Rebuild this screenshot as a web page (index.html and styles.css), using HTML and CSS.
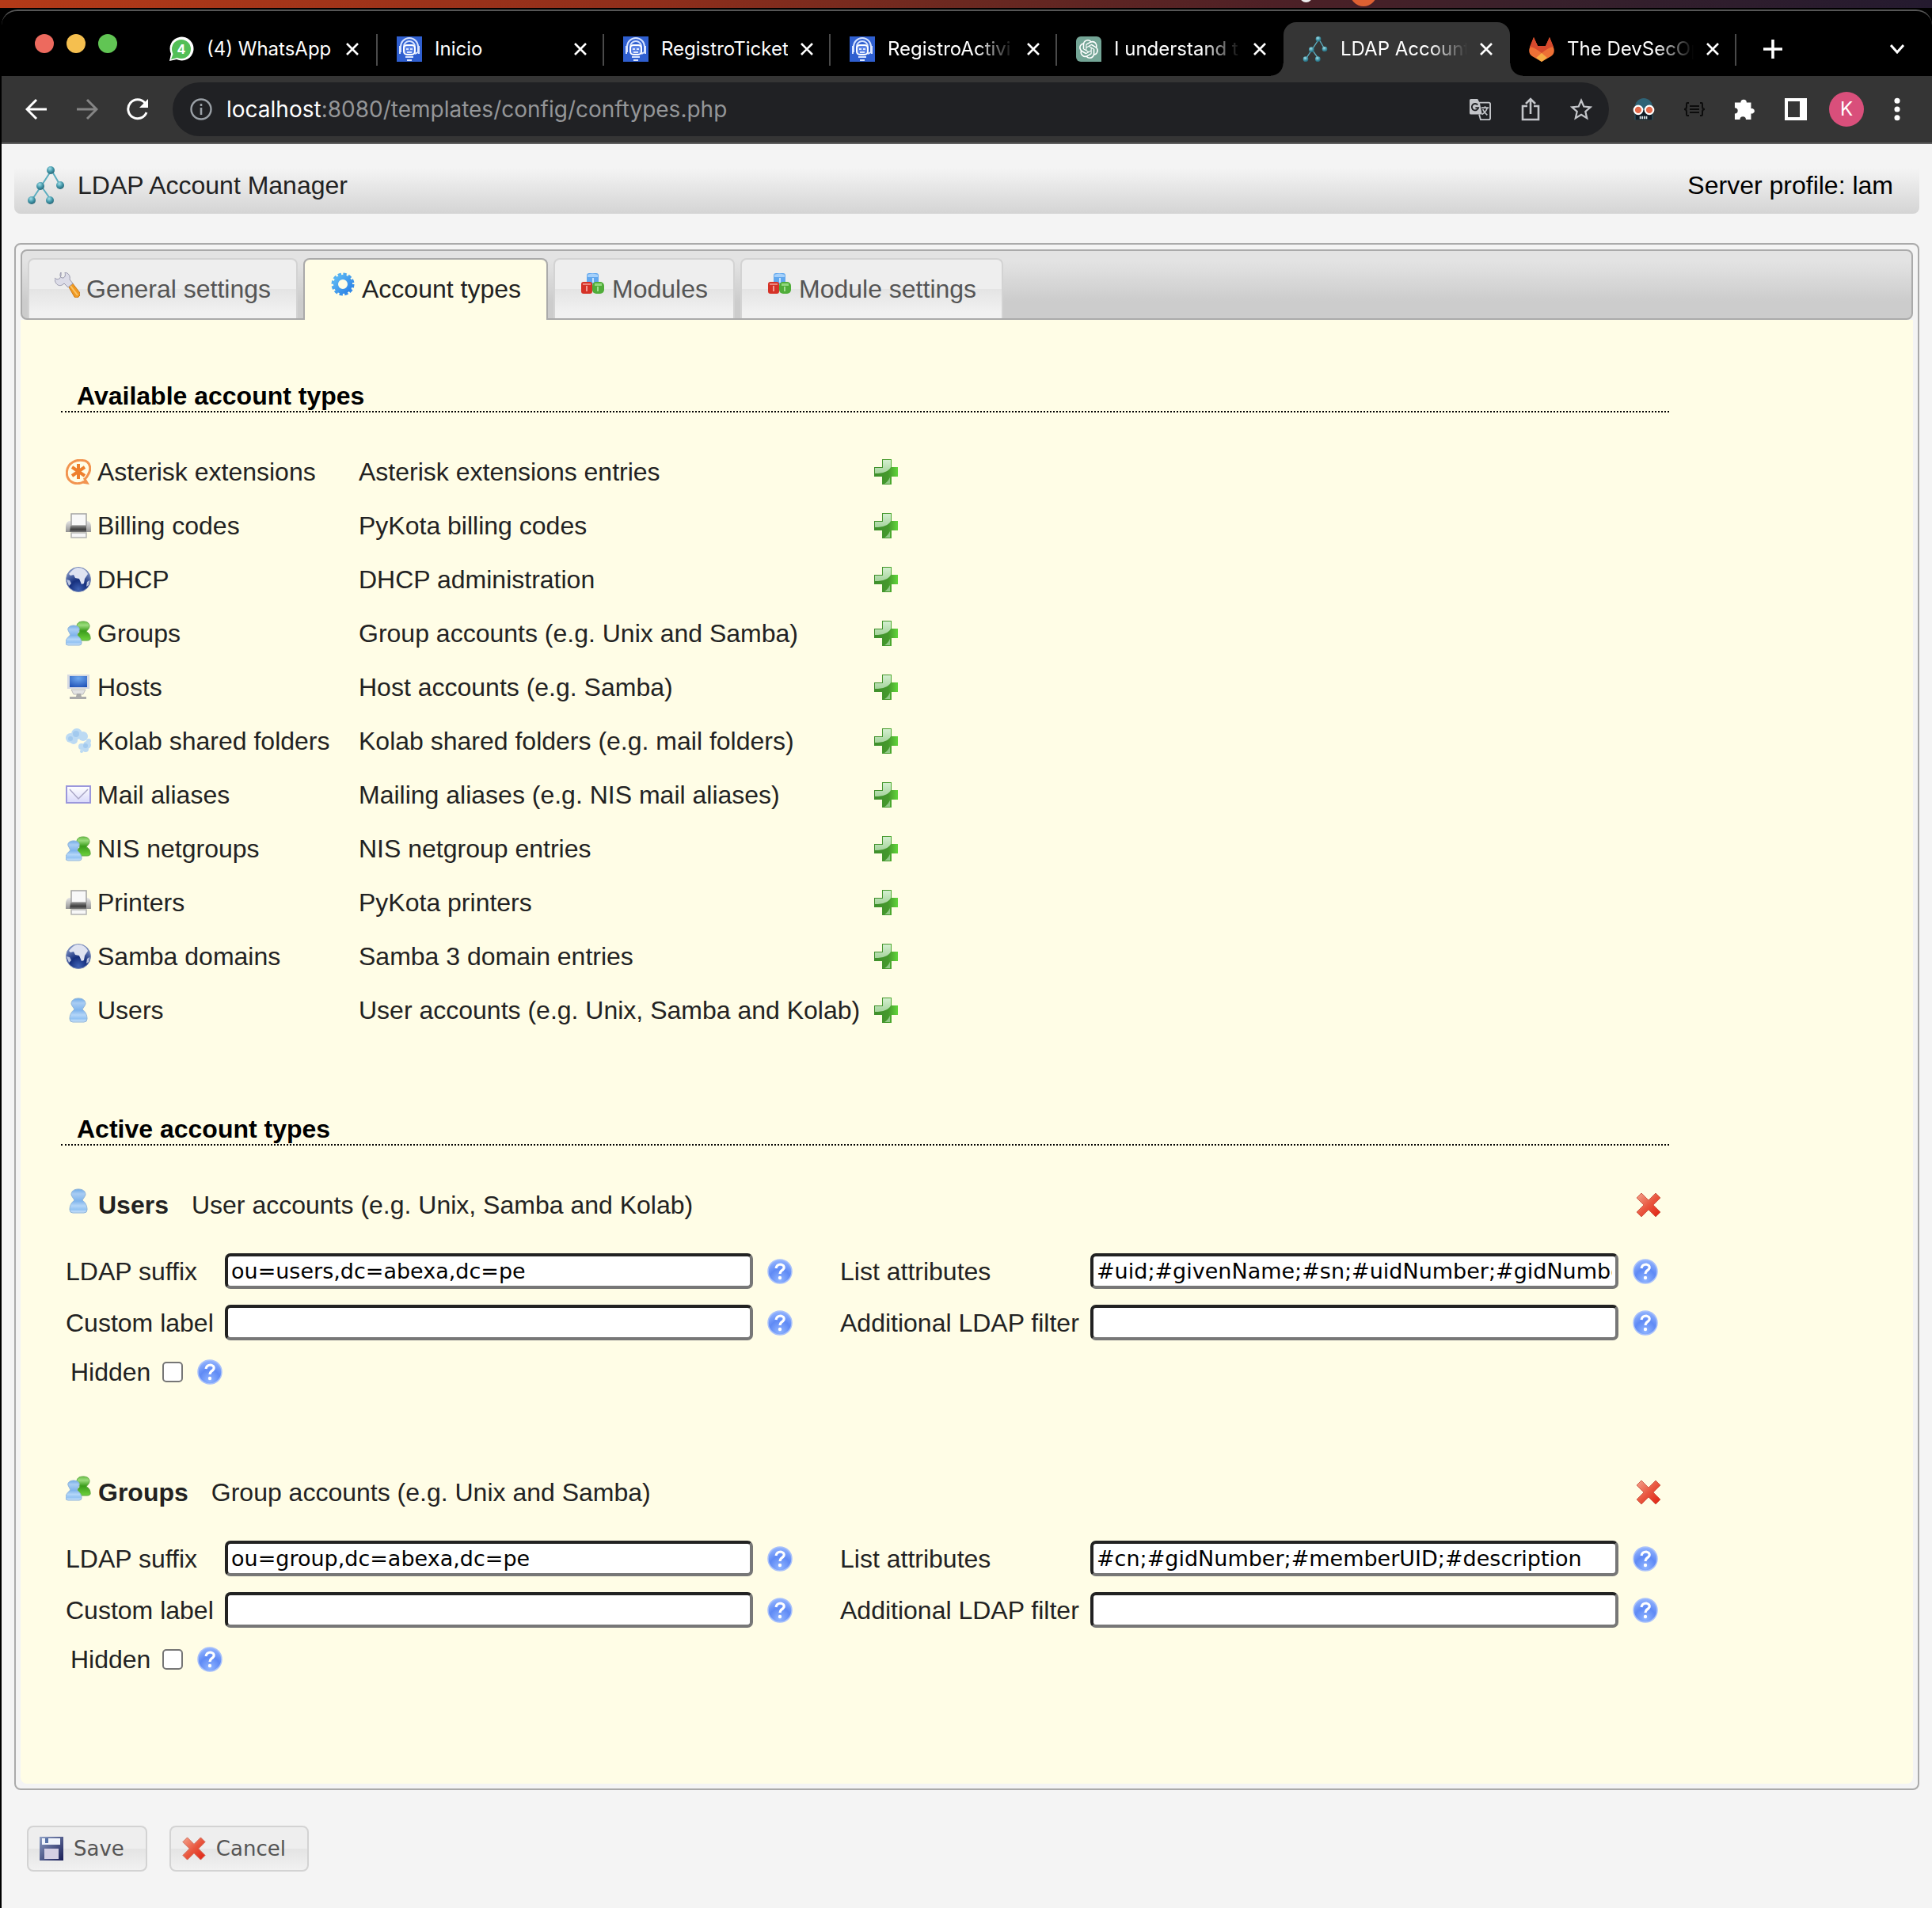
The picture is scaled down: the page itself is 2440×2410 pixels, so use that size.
FILE: index.html
```html
<!DOCTYPE html>
<html lang="en">
<head>
<meta charset="utf-8">
<title>LDAP Account Manager</title>
<link rel="stylesheet" href="styles.css">
</head>
<body>
<svg class="sprite" aria-hidden="true">
  <defs>
    <linearGradient id="g-blue" x1="0" y1="0" x2="0" y2="1"><stop offset="0" stop-color="#6fabe8"/><stop offset=".2" stop-color="#a9cdf3"/><stop offset=".5" stop-color="#7fb4ec"/><stop offset=".7" stop-color="#b4d6f8"/><stop offset=".85" stop-color="#93c3f3"/><stop offset="1" stop-color="#cfe5fb"/></linearGradient>
    <linearGradient id="g-green" x1="0" y1="0" x2="0" y2="1"><stop offset="0" stop-color="#6cc24a"/><stop offset=".2" stop-color="#9bdc7c"/><stop offset=".5" stop-color="#3a9c1a"/><stop offset="1" stop-color="#6fd23e"/></linearGradient>
    <linearGradient id="g-plus" x1="0" y1="0" x2="1" y2="0"><stop offset="0" stop-color="#3f8f2c"/><stop offset=".6" stop-color="#45992c"/><stop offset="1" stop-color="#62d63c"/></linearGradient>
    <linearGradient id="g-shine" x1="0" y1="0" x2="0" y2="1"><stop offset="0" stop-color="#d3efcf"/><stop offset="1" stop-color="#a5d39c"/></linearGradient>
    <linearGradient id="g-red" x1="0" y1="0" x2="1" y2="1"><stop offset="0" stop-color="#f4a48d"/><stop offset=".5" stop-color="#e9573f"/><stop offset="1" stop-color="#e01f10"/></linearGradient>
    <radialGradient id="g-help" cx=".5" cy=".85" r=".9"><stop offset="0" stop-color="#8fb4ff"/><stop offset=".5" stop-color="#5f8af5"/><stop offset="1" stop-color="#9dbcff"/></radialGradient>
    <radialGradient id="g-globe" cx=".5" cy=".9" r=".9"><stop offset="0" stop-color="#3f62b4"/><stop offset=".4" stop-color="#16307e"/><stop offset="1" stop-color="#8ea1cf"/></radialGradient>
    <linearGradient id="g-print" x1="0" y1="0" x2="0" y2="1"><stop offset="0" stop-color="#e6e6e6"/><stop offset="1" stop-color="#929292"/></linearGradient>
    <linearGradient id="g-dark" x1="0" y1="0" x2="0" y2="1"><stop offset="0" stop-color="#8a8a8a"/><stop offset=".6" stop-color="#3c3c3c"/><stop offset="1" stop-color="#777"/></linearGradient>
    <radialGradient id="g-screen" cx=".5" cy=".2" r=".9"><stop offset="0" stop-color="#6fa8ee"/><stop offset="1" stop-color="#1d4fb5"/></radialGradient>
    <linearGradient id="g-mail" x1="0" y1="0" x2="0" y2="1"><stop offset="0" stop-color="#fff"/><stop offset="1" stop-color="#d9d9fa"/></linearGradient>
    <linearGradient id="g-gear" x1="0" y1="0" x2="1" y2="1"><stop offset="0" stop-color="#5db9f4"/><stop offset="1" stop-color="#2d83e6"/></linearGradient>
    <linearGradient id="g-disk" x1="0" y1="0" x2="1" y2="1"><stop offset="0" stop-color="#8e9fc4"/><stop offset="1" stop-color="#171b55"/></linearGradient>
    <radialGradient id="g-node" cx=".4" cy=".3" r=".8"><stop offset="0" stop-color="#a4e0ea"/><stop offset=".5" stop-color="#4296a8"/><stop offset="1" stop-color="#1d5666"/></radialGradient>
  </defs>
  <symbol id="i-lam" viewBox="0 0 48 48"><path d="M31 5 18 25 6 43M31 5l11 19M18 25l12 17" fill="none" stroke="#5cadbf" stroke-width="2"/><g fill="url(#g-node)"><circle cx="30" cy="5" r="5"/><circle cx="17" cy="25" r="5"/><circle cx="42" cy="24" r="5"/><circle cx="6" cy="43" r="5"/><circle cx="29" cy="43" r="5"/></g></symbol>
  <symbol id="i-wa" viewBox="0 0 32 32"><path d="M1 31 3 22A15 15 0 1 1 10 29Z" fill="#fff"/><circle cx="16" cy="16" r="12" fill="#52bf56"/><path d="M3 29 6 21 11 27Z" fill="#52bf56"/></symbol>
  <symbol id="i-robot" viewBox="0 0 32 32"><path fill="#2f5fd0" d="M0 0h32v32H0z"/><path d="M5 20V13a11 11 0 0 1 22 0v7l-4 2M9 19v-6a7 7 0 0 1 14 0v6" fill="none" stroke="#d5e2ff" stroke-width="2"/><rect x="9" y="11" width="14" height="12" rx="4" fill="#5b83e4" stroke="#fff" stroke-width="2"/><path d="M12 16h3m2 0h3M13 20h6M11 26h10M13 30h6M4 12v10M28 12v10" stroke="#dbe6ff" stroke-width="2"/></symbol>
  <symbol id="i-gpt" viewBox="0 0 32 32"><path d="M6 0h20a6 6 0 0 1 6 6v26H6a6 6 0 0 1-6-6V6a6 6 0 0 1 6-6Z" fill="#74a596"/><path transform="translate(4 4)" fill="#fff" d="M22.2819 9.8211a5.9847 5.9847 0 0 0-.5157-4.9108 6.0462 6.0462 0 0 0-6.5098-2.9A6.0651 6.0651 0 0 0 4.9807 4.1818a5.9847 5.9847 0 0 0-3.9977 2.9 6.0462 6.0462 0 0 0 .7427 7.0966 5.98 5.98 0 0 0 .511 4.9107 6.051 6.051 0 0 0 6.5146 2.9001A5.9847 5.9847 0 0 0 13.2599 24a6.0557 6.0557 0 0 0 5.7718-4.2058 5.9894 5.9894 0 0 0 3.9977-2.9001 6.0557 6.0557 0 0 0-.7475-7.0729zm-9.022 12.6081a4.4755 4.4755 0 0 1-2.8764-1.0408l.1419-.0804 4.7783-2.7582a.7948.7948 0 0 0 .3927-.6813v-6.7369l2.02 1.1686a.071.071 0 0 1 .038.052v5.5826a4.504 4.504 0 0 1-4.4945 4.4944zm-9.6607-4.1254a4.4708 4.4708 0 0 1-.5346-3.0137l.142.0852 4.783 2.7582a.7712.7712 0 0 0 .7806 0l5.8428-3.3685v2.3324a.0804.0804 0 0 1-.0332.0615L9.74 19.9502a4.4992 4.4992 0 0 1-6.1408-1.6464zM2.3408 7.8956a4.485 4.485 0 0 1 2.3655-1.9728V11.6a.7664.7664 0 0 0 .3879.6765l5.8144 3.3543-2.0201 1.1685a.0757.0757 0 0 1-.071 0l-4.8303-2.7865A4.504 4.504 0 0 1 2.3408 7.872zm16.5963 3.8558L13.1038 8.364 15.1192 7.2a.0757.0757 0 0 1 .071 0l4.8303 2.7913a4.4944 4.4944 0 0 1-.6765 8.1042v-5.6772a.79.79 0 0 0-.407-.667zm2.0107-3.0231l-.142-.0852-4.7735-2.7818a.7759.7759 0 0 0-.7854 0L9.409 9.2297V6.8974a.0662.0662 0 0 1 .0284-.0615l4.8303-2.7866a4.4992 4.4992 0 0 1 6.6802 4.66zM8.3065 12.863l-2.02-1.1638a.0804.0804 0 0 1-.038-.0567V6.0742a4.4992 4.4992 0 0 1 7.3757-3.4537l-.142.0805L8.704 5.459a.7948.7948 0 0 0-.3927.6813zm1.0976-2.3654l2.602-1.4998 2.6069 1.4998v2.9994l-2.5974 1.4997-2.6067-1.4997Z"/></symbol>
  <symbol id="i-gitlab" viewBox="0 0 32 32"><path d="M6 1 1 14c-2 5 0 9 3 11l12 7 12-7c3-2 5-6 3-11L26 1l-5 11H11Z" fill="#ee7035"/><path d="M6 1 1 13c6 1 10 4 15 8 5-4 9-7 15-8L26 1l-5 11H11Z" fill="#d5492d"/><path d="m9 27 7-6 7 6-7 5Z" fill="#f7ac43"/></symbol>
  <symbol id="i-x" viewBox="0 0 16 16"><path d="m1 1 14 14M15 1 1 15" stroke="currentColor" stroke-width="2.600"/></symbol>
  <symbol id="i-newtab" viewBox="0 0 24 24"><path d="M12 0v24M0 12h24" stroke="currentColor" stroke-width="3.600"/></symbol>
  <symbol id="i-chev" viewBox="0 0 18 12"><path d="m1 1 8 9 8-9" fill="none" stroke="currentColor" stroke-width="3"/></symbol>
  <symbol id="i-back" viewBox="0 0 28 28"><path d="M27 14H3M14 2 2 14l12 12" fill="none" stroke="currentColor" stroke-width="3"/></symbol>
  <symbol id="i-fwd" viewBox="0 0 28 28"><path d="M1 14h24M14 2l12 12-12 12" fill="none" stroke="currentColor" stroke-width="3"/></symbol>
  <symbol id="i-reload" viewBox="0 0 28 28"><path d="M25 18A12 12 0 1 1 23 6" fill="none" stroke="currentColor" stroke-width="3"/><path d="M27 1v11H16Z" fill="currentColor"/></symbol>
  <symbol id="i-info" viewBox="0 0 28 28"><circle cx="14" cy="14" r="12.500" fill="none" stroke="currentColor" stroke-width="2.400"/><path d="M14 12v9M14 7v3" stroke="currentColor" stroke-width="2.600"/></symbol>
  <symbol id="i-trans" viewBox="0 0 30 30"><path d="M3 1h9l3 6 3 15H3a2 2 0 0 1-2-2V3a2 2 0 0 1 2-2Z" fill="#c3c5c9"/><path d="M14 6h13a2 2 0 0 1 2 2v19a2 2 0 0 1-2 2H16l-2-7" fill="none" stroke="#c3c5c9" stroke-width="2"/><path d="M12 9a4.500 4.500 0 1 0 1 4H9" fill="none" stroke="#202124" stroke-width="2"/><path d="M17 13h10M22 11v2M25 13c-1 4-4 7-7 9M19 15c1 3 4 6 6 8" fill="none" stroke="#c3c5c9" stroke-width="1.800"/></symbol>
  <symbol id="i-share" viewBox="0 0 28 30"><path d="M10 11H4v17h20V11h-6M14 21V3M8 8l6-6 6 6" fill="none" stroke="currentColor" stroke-width="2.600"/></symbol>
  <symbol id="i-star" viewBox="0 0 30 30"><path d="m15 3 3.500 8.300 9 .8-6.800 6 2 8.900-7.700-4.700L7.300 27l2-8.900-6.800-6 9-.8Z" fill="none" stroke="currentColor" stroke-width="2.400"/></symbol>
  <symbol id="i-goggles" viewBox="0 0 32 32"><path d="M3 14C3 6 9 0 16 0s13 6 13 14v17H3Z" fill="#2f6376"/><path d="M4 17h24v14H4z" fill="#111c26"/><g fill="#e2694a" stroke="#fff" stroke-width="2.500"><circle cx="8" cy="17" r="6"/><circle cx="24" cy="17" r="6"/></g><path d="M10 28h12" stroke="#dfe7ea" stroke-width="4" stroke-dasharray="2 1"/></symbol>
  <symbol id="i-json" viewBox="0 0 28 18"><path d="M7 1H5Q4 1 4 3v3q0 3-3 3 3 0 3 3v3q0 2 1 2h2M21 1h2q1 0 1 2v3q0 3 3 3-3 0-3 3v3q0 2-1 2h-2M8 5h12M8 9h12M8 13h12" fill="none" stroke="#0c0c0c" stroke-width="2"/></symbol>
  <symbol id="i-puzzle" viewBox="0 0 30 30"><path d="M9 6a4 4 0 0 1 8 0h6v8h2a3.600 3.600 0 0 1 0 7h-2v8h-7a4 4 0 0 0-8 0H1v-8a4 4 0 0 0 0-8V6Z" fill="currentColor"/></symbol>
  <symbol id="i-panel" viewBox="0 0 28 28"><path d="M0 0h28v28H0Zm4 4v20h15V4Z" fill="currentColor" fill-rule="evenodd"/></symbol>
  <symbol id="i-dots" viewBox="0 0 8 28"><g fill="currentColor"><circle cx="4" cy="4" r="3.300"/><circle cx="4" cy="14" r="3.300"/><circle cx="4" cy="24" r="3.300"/></g></symbol>
  <symbol id="i-wrench" viewBox="0 0 32 32"><path d="m17 17 5-4 10 13c1 4-4 8-7 5Z" fill="#f09a22" stroke="#c9791c"/><path d="m20 17 9 12" stroke="#fbc469" stroke-width="2"/><path d="M8 0C6 3 7 7 10 7s4-3 3-7c5 1 7 5 6 9l4 5-6 5-5-5C6 20 0 15 0 7c4 4 9 1 8-7Z" fill="#dcdce8" stroke="#9797ab"/></symbol>
  <symbol id="i-gear" viewBox="0 0 32 32"><circle cx="16" cy="15" r="12" fill="none" stroke="url(#g-gear)" stroke-width="5" stroke-dasharray="4 2.283"/><circle cx="16" cy="15" r="9" fill="none" stroke="url(#g-gear)" stroke-width="6"/></symbol>
  <symbol id="i-cubes" viewBox="0 0 32 32"><rect x="8" y="1" width="15" height="14" rx="3" fill="#62a8ee"/><path d="M9 3q6-3 13 0v3H9Z" fill="#a5d0fa"/><path d="M15 7h2v6h-2z" fill="#c5e2ff"/><rect x="1" y="12" width="14" height="15" rx="3" fill="#d53227"/><path d="M3 14h10v2H3z" fill="#ec867c"/><path d="M7 17h2v7H7z" fill="#f19a92"/><rect x="15" y="12" width="15" height="15" rx="5" fill="#50ad3a"/><path d="M18 14h9v3h-9z" fill="#93d77e"/><path d="M21 18h2v6h-2z" fill="#a2dd90"/></symbol>
  <symbol id="i-asterisk" viewBox="0 0 32 32"><path d="M24 28C11 35 0 27 1.500 15 3 4 14 0 22 1.500c9 1 11 11 6 18.500-2 4-4 5-4 5l3 5-6-1" fill="none" stroke="#f29450" stroke-width="3"/><path d="M16 6v19M8 10l16 11M24 10 8 21" stroke="#ee7f2d" stroke-width="4"/></symbol>
  <symbol id="i-printer" viewBox="0 0 32 32"><path d="M4 10h24q4 2 4 7v7H0v-7q0-5 4-7Z" fill="url(#g-print)"/><rect x="7" y="1" width="19" height="15" fill="#f8f8f8" stroke="#a3a3a3" stroke-width="1.500"/><path d="M6 16h20v8H5Z" fill="url(#g-dark)"/><path d="M7 25h19v6H7z" fill="#f7f7f7" stroke="#b3b3b3" stroke-width="1.500"/></symbol>
  <symbol id="i-globe" viewBox="0 0 32 32"><circle cx="16" cy="16" r="15.500" fill="url(#g-globe)" stroke="#7c8cb8"/><path d="M4 9C7 5 10 2 15 1c6 0 11 3 13 8l-2 3-2 3-1 6-3 1-3-7-5-1-2-4-4 1Z" fill="#dfe3f1"/><path d="m1 16 4 1 2 4-3 3Zm26 3 3-2-1 6-3 2Z" fill="#bac4df"/></symbol>
  <symbol id="i-user" viewBox="0 0 32 32"><path d="M16 1C10 1 7 4 7 8c1 3 3 5 4 7-4 3-6 7-6 12q0 4 4 4h14q4 0 4-4c0-5-2-9-6-12 1-2 3-4 4-7 0-4-3-7-9-7Z" fill="url(#g-blue)" stroke="#8fb4da"/></symbol>
  <symbol id="i-group" viewBox="0 0 32 32"><path d="M22 1c-6 0-8 3-8 6l4 7c-3 2-4 5-4 11h13q5 0 4-4c0-3-2-6-5-7 1-2 4-4 4-7 0-4-3-6-8-6Z" fill="url(#g-green)" stroke="#5fa844"/><path d="M10 6C5 6 2 9 3 12l3 6c-4 3-6 6-6 10q0 3 3 3h14q3 0 3-3c0-4-2-7-6-10l3-6c1-3-2-6-7-6Z" fill="url(#g-blue)" stroke="#8fb4da"/></symbol>
  <symbol id="i-host" viewBox="0 0 32 32"><path d="M2 0h28v18H2z" fill="#d7dae2"/><path d="M5 2h22v14H5z" fill="url(#g-screen)"/><path d="M7 19h18l-3 6H10Z" fill="#e3e3e3" stroke="#bbb"/><path d="M14 24h5l1 4h-7zM5 28h21v3H5z" fill="#aaa"/></symbol>
  <symbol id="i-kolab" viewBox="0 0 32 32"><g fill="#bcdaf3"><circle cx="6" cy="12" r="6"/><circle cx="14" cy="7" r="7"/><circle cx="22" cy="10" r="6"/><circle cx="10" cy="15" r="5"/><circle cx="20" cy="23" r="4"/><circle cx="27" cy="21" r="5"/><circle cx="25" cy="26" r="4"/><circle cx="20" cy="29" r="2"/><circle cx="29" cy="16" r="3"/></g><g fill="#a3caee"><circle cx="13" cy="7" r="4"/><circle cx="6" cy="13" r="3"/><circle cx="25" cy="22" r="3"/></g></symbol>
  <symbol id="i-mail" viewBox="0 0 32 32"><path d="M1 5h30v21H1z" fill="url(#g-mail)" stroke="#9b97dc" stroke-width="2"/><path d="m5 9 11 12L28 9" fill="none" stroke="#aaa7c6" stroke-width="1.500"/></symbol>
  <symbol id="i-plus" viewBox="0 0 30 32"><path d="M10 0h12v10h8v12h-8v10H10V22H0V10h10Z" fill="url(#g-plus)"/><path d="M11 1h10v9q-4 8-20 8v-7h10Z" fill="url(#g-shine)"/><path d="M20 23v8h-7q4-2 7-8Z" fill="#91c987"/></symbol>
  <symbol id="i-del" viewBox="0 0 32 32"><path d="M7 1 1 7l9 9-9 9 6 6 9-9 9 9 6-6-9-9 9-9-6-6-9 9Z" fill="url(#g-red)" stroke="#d0624f" stroke-linejoin="round"/></symbol>
  <symbol id="i-help" viewBox="0 0 32 32"><circle cx="16" cy="16" r="15" fill="url(#g-help)" stroke="#a9c1fb" stroke-width="1.500"/><path d="M11 12q1-5 6-5 5 1 4 5-1 2-3 3-2 2-2 4" fill="none" stroke="#fff" stroke-width="3.200"/><circle cx="16" cy="24" r="2.200" fill="#fff"/></symbol>
  <symbol id="i-disk" viewBox="0 0 30 30"><path d="M0 0h30v30H0z" fill="url(#g-disk)"/><path d="M3 2h23v8H3z" fill="#f0f4fb"/><path d="M7 2h4v6H7z" fill="#5773a8"/><path d="M6 15h18v13H6z" fill="#d4cfe4"/></symbol>
</svg>

<div class="wallpaper"><span class="wall-ring"></span><span class="wall-dot"></span></div>
<div class="window">
  <div class="tabstrip">
    <div class="lights"><span class="light red"></span><span class="light amber"></span><span class="light green"></span></div>
    <div class="btab sep"><span class="wa"><svg class="fav"><use href="#i-wa"/></svg><b>4</b></span><span class="btitle">(4) WhatsApp</span><button class="bclose" aria-label="Close tab"><svg><use href="#i-x"/></svg></button></div>
    <div class="btab sep"><svg class="fav"><use href="#i-robot"/></svg><span class="btitle">Inicio</span><button class="bclose" aria-label="Close tab"><svg><use href="#i-x"/></svg></button></div>
    <div class="btab sep"><svg class="fav"><use href="#i-robot"/></svg><span class="btitle">RegistroTicket</span><button class="bclose" aria-label="Close tab"><svg><use href="#i-x"/></svg></button></div>
    <div class="btab sep"><svg class="fav"><use href="#i-robot"/></svg><span class="btitle fade">RegistroActivi</span><button class="bclose" aria-label="Close tab"><svg><use href="#i-x"/></svg></button></div>
    <div class="btab"><svg class="fav"><use href="#i-gpt"/></svg><span class="btitle fade">I understand t</span><button class="bclose" aria-label="Close tab"><svg><use href="#i-x"/></svg></button></div>
    <div class="btab current"><svg class="fav"><use href="#i-lam"/></svg><span class="btitle fade">LDAP Account</span><button class="bclose" aria-label="Close tab"><svg><use href="#i-x"/></svg></button></div>
    <div class="btab sep"><svg class="fav"><use href="#i-gitlab"/></svg><span class="btitle fade">The DevSecOp</span><button class="bclose" aria-label="Close tab"><svg><use href="#i-x"/></svg></button></div>
    <button class="newtab" aria-label="New tab"><svg><use href="#i-newtab"/></svg></button>
    <button class="tabsearch" aria-label="Search tabs"><svg><use href="#i-chev"/></svg></button>
  </div>
  <div class="toolbar">
    <div class="nav">
      <button class="tool" aria-label="Back"><svg><use href="#i-back"/></svg></button>
      <button class="tool dim" aria-label="Forward"><svg><use href="#i-fwd"/></svg></button>
      <button class="tool" aria-label="Reload"><svg><use href="#i-reload"/></svg></button>
    </div>
    <div class="omnibox">
      <svg class="info"><use href="#i-info"/></svg>
      <span class="url"><span class="host">localhost</span>:8080/templates/config/conftypes.php</span>
      <div class="omni-tools">
        <button class="tool" aria-label="Translate"><svg><use href="#i-trans"/></svg></button>
        <button class="tool" aria-label="Share"><svg><use href="#i-share"/></svg></button>
        <button class="tool" aria-label="Bookmark"><svg><use href="#i-star"/></svg></button>
      </div>
    </div>
    <div class="extensions">
      <button class="tool" aria-label="Extension"><svg><use href="#i-goggles"/></svg></button>
      <button class="tool" aria-label="JSON viewer"><svg><use href="#i-json"/></svg></button>
      <button class="tool" aria-label="Extensions"><svg><use href="#i-puzzle"/></svg></button>
      <button class="tool" aria-label="Side panel"><svg><use href="#i-panel"/></svg></button>
      <button class="avatar">K</button>
      <button class="tool" aria-label="Menu"><svg><use href="#i-dots"/></svg></button>
    </div>
  </div>

  <main class="page">
    <header class="banner">
      <svg class="logo"><use href="#i-lam"/></svg>
      <span class="brand">LDAP Account Manager</span>
      <span class="profile">Server profile: lam</span>
    </header>

    <form class="panel">
      <nav class="tabs">
        <a class="tab" href="#general"><svg class="icon"><use href="#i-wrench"/></svg>General settings</a>
        <a class="tab selected" href="#types"><svg class="icon"><use href="#i-gear"/></svg>Account types</a>
        <a class="tab" href="#modules"><svg class="icon"><use href="#i-cubes"/></svg>Modules</a>
        <a class="tab" href="#module-settings"><svg class="icon"><use href="#i-cubes"/></svg>Module settings</a>
      </nav>
      <div class="content">
        <h2>Available account types</h2>
        <table class="types">
          <tr><td><span class="name"><svg class="icon"><use href="#i-asterisk"/></svg>Asterisk extensions</span></td><td>Asterisk extensions entries</td><td><button type="button" class="act" aria-label="Add"><svg class="icon"><use href="#i-plus"/></svg></button></td></tr>
          <tr><td><span class="name"><svg class="icon"><use href="#i-printer"/></svg>Billing codes</span></td><td>PyKota billing codes</td><td><button type="button" class="act" aria-label="Add"><svg class="icon"><use href="#i-plus"/></svg></button></td></tr>
          <tr><td><span class="name"><svg class="icon"><use href="#i-globe"/></svg>DHCP</span></td><td>DHCP administration</td><td><button type="button" class="act" aria-label="Add"><svg class="icon"><use href="#i-plus"/></svg></button></td></tr>
          <tr><td><span class="name"><svg class="icon"><use href="#i-group"/></svg>Groups</span></td><td>Group accounts (e.g. Unix and Samba)</td><td><button type="button" class="act" aria-label="Add"><svg class="icon"><use href="#i-plus"/></svg></button></td></tr>
          <tr><td><span class="name"><svg class="icon"><use href="#i-host"/></svg>Hosts</span></td><td>Host accounts (e.g. Samba)</td><td><button type="button" class="act" aria-label="Add"><svg class="icon"><use href="#i-plus"/></svg></button></td></tr>
          <tr><td><span class="name"><svg class="icon"><use href="#i-kolab"/></svg>Kolab shared folders</span></td><td>Kolab shared folders (e.g. mail folders)</td><td><button type="button" class="act" aria-label="Add"><svg class="icon"><use href="#i-plus"/></svg></button></td></tr>
          <tr><td><span class="name"><svg class="icon"><use href="#i-mail"/></svg>Mail aliases</span></td><td>Mailing aliases (e.g. NIS mail aliases)</td><td><button type="button" class="act" aria-label="Add"><svg class="icon"><use href="#i-plus"/></svg></button></td></tr>
          <tr><td><span class="name"><svg class="icon"><use href="#i-group"/></svg>NIS netgroups</span></td><td>NIS netgroup entries</td><td><button type="button" class="act" aria-label="Add"><svg class="icon"><use href="#i-plus"/></svg></button></td></tr>
          <tr><td><span class="name"><svg class="icon"><use href="#i-printer"/></svg>Printers</span></td><td>PyKota printers</td><td><button type="button" class="act" aria-label="Add"><svg class="icon"><use href="#i-plus"/></svg></button></td></tr>
          <tr><td><span class="name"><svg class="icon"><use href="#i-globe"/></svg>Samba domains</span></td><td>Samba 3 domain entries</td><td><button type="button" class="act" aria-label="Add"><svg class="icon"><use href="#i-plus"/></svg></button></td></tr>
          <tr><td><span class="name"><svg class="icon"><use href="#i-user"/></svg>Users</span></td><td>User accounts (e.g. Unix, Samba and Kolab)</td><td><button type="button" class="act" aria-label="Add"><svg class="icon"><use href="#i-plus"/></svg></button></td></tr>
        </table>

        <h2>Active account types</h2>
        <section class="active">
          <div class="title"><svg class="icon raised"><use href="#i-user"/></svg><strong>Users</strong><span>User accounts (e.g. Unix, Samba and Kolab)</span><button type="button" class="act remove" aria-label="Remove"><svg class="icon"><use href="#i-del"/></svg></button></div>
          <div class="fields">
            <label for="u-suffix">LDAP suffix</label><input id="u-suffix" type="text" value="ou=users,dc=abexa,dc=pe"><button type="button" class="act help" aria-label="Help"><svg class="icon"><use href="#i-help"/></svg></button>
            <label for="u-attr">List attributes</label><input id="u-attr" type="text" value="#uid;#givenName;#sn;#uidNumber;#gidNumber"><button type="button" class="act help" aria-label="Help"><svg class="icon"><use href="#i-help"/></svg></button>
            <label for="u-label">Custom label</label><input id="u-label" type="text"><button type="button" class="act help" aria-label="Help"><svg class="icon"><use href="#i-help"/></svg></button>
            <label for="u-filter">Additional LDAP filter</label><input id="u-filter" type="text"><button type="button" class="act help" aria-label="Help"><svg class="icon"><use href="#i-help"/></svg></button>
          </div>
          <div class="hidden-row"><label for="u-hidden">Hidden</label><input id="u-hidden" type="checkbox"><button type="button" class="act help" aria-label="Help"><svg class="icon"><use href="#i-help"/></svg></button></div>
        </section>
        <section class="active">
          <div class="title"><svg class="icon raised"><use href="#i-group"/></svg><strong>Groups</strong><span>Group accounts (e.g. Unix and Samba)</span><button type="button" class="act remove" aria-label="Remove"><svg class="icon"><use href="#i-del"/></svg></button></div>
          <div class="fields">
            <label for="g-suffix">LDAP suffix</label><input id="g-suffix" type="text" value="ou=group,dc=abexa,dc=pe"><button type="button" class="act help" aria-label="Help"><svg class="icon"><use href="#i-help"/></svg></button>
            <label for="g-attr">List attributes</label><input id="g-attr" type="text" value="#cn;#gidNumber;#memberUID;#description"><button type="button" class="act help" aria-label="Help"><svg class="icon"><use href="#i-help"/></svg></button>
            <label for="g-label">Custom label</label><input id="g-label" type="text"><button type="button" class="act help" aria-label="Help"><svg class="icon"><use href="#i-help"/></svg></button>
            <label for="g-filter">Additional LDAP filter</label><input id="g-filter" type="text"><button type="button" class="act help" aria-label="Help"><svg class="icon"><use href="#i-help"/></svg></button>
          </div>
          <div class="hidden-row"><label for="g-hidden">Hidden</label><input id="g-hidden" type="checkbox"><button type="button" class="act help" aria-label="Help"><svg class="icon"><use href="#i-help"/></svg></button></div>
        </section>
      </div>
    </form>

    <div class="buttons">
      <button class="btn"><svg><use href="#i-disk"/></svg>Save</button>
      <button class="btn"><svg><use href="#i-del"/></svg>Cancel</button>
    </div>
  </main>
</div>
</body>
</html>
```

FILE: styles.css
```css
* { box-sizing: border-box; }
body {
  margin: 0;
  background: #000;
  color: #222;
  font: 32px/36px "Liberation Sans", Arial, sans-serif;
}
button { margin: 0; padding: 0; border: 0; background: none; color: inherit; font: inherit; }
svg { display: block; flex: none; }
.sprite { position: absolute; width: 0; height: 0; }

/* desktop edge above the window */
.wallpaper {
  position: relative;
  height: 12px;
  overflow: hidden;
  border-bottom: 2px solid #000;
  background: linear-gradient(90deg, #b43a18, #8f2e1b 34%, #6b2820 50%, #4d2026 66%, #38202b 80%, #241a2f);
}
.wall-ring { position: absolute; left: 1642px; bottom: 7px; width: 15px; height: 14px; border: 3px solid #eee; border-radius: 50%; }
.wall-dot { position: absolute; left: 1705px; bottom: 2px; width: 34px; height: 34px; border-radius: 50%; background: #dd6032; }

.window {
  margin-left: 2px;
  border-top: 2px solid #565656;
  border-radius: 20px 20px 0 0;
  overflow: hidden;
  background: #000;
}

.tabstrip { display: flex; height: 82px; padding: 14px 35px 0 42px; color: #fff; }
.lights { display: flex; gap: 16px; width: 147px; padding-top: 15px; flex: none; }
.light { width: 24px; height: 24px; border-radius: 50%; }
.red { background: #ed6a5e; }
.amber { background: #f5bf4f; }
.green { background: #61c554; }
.btab {
  position: relative;
  display: flex;
  align-items: center;
  gap: 16px;
  flex: 0 1 286px;
  min-width: 0;
  height: 68px;
  padding: 0 22px 0 24px;
  font: 24px/32px Inter, "Liberation Sans", sans-serif;
}
.lights + .btab { padding-left: 22px; padding-right: 24px; }
.btab.sep::after { content: ""; position: absolute; right: 0; top: 15px; width: 2px; height: 40px; background: #4a4a4a; }
.btab.current { background: #353535; border-radius: 16px 16px 0 0; }
.btab.current::before,
.btab.current::after { content: ""; position: absolute; bottom: 0; width: 16px; height: 16px; }
.btab.current::before { left: -16px; background: radial-gradient(circle at 0 0, #000 15px, #353535 16px); }
.btab.current::after { right: -16px; background: radial-gradient(circle at 100% 0, #000 15px, #353535 16px); }
.fav { width: 32px; height: 32px; }
.wa { position: relative; }
.wa b { position: absolute; inset: 0; text-align: center; font-size: 16px; line-height: 32px; }
.btitle { flex: 1; min-width: 0; overflow: hidden; white-space: nowrap; }
.fade { -webkit-mask-image: linear-gradient(90deg, #000 70%, transparent); mask-image: linear-gradient(90deg, #000 70%, transparent); }
.bclose svg { width: 16px; height: 16px; }
.newtab { width: 92px; padding-left: 34px; }
.newtab svg { width: 24px; height: 24px; }
.tabsearch { margin-left: auto; }
.tabsearch svg { width: 18px; height: 12px; }

.toolbar {
  display: flex;
  align-items: center;
  height: 86px;
  padding: 0 12px;
  border-bottom: 2px solid #5f5f5f;
  background: #353535;
  color: #fff;
}
.nav { display: flex; width: 204px; flex: none; }
.tool { display: grid; place-items: center; width: 64px; height: 64px; flex: none; }
.tool svg { width: 28px; height: 30px; }
.dim { color: #858585; }
.omnibox {
  display: flex;
  align-items: center;
  flex: 1;
  height: 68px;
  padding: 0 3px 0 22px;
  border-radius: 34px;
  background: #202124;
  color: #c3c5c9;
}
.info { width: 28px; height: 28px; color: #9aa0a6; }
.url { flex: 1; margin-left: 18px; color: #949698; font: 28px/36px Inter, "Liberation Sans", sans-serif; }
.host { color: #fff; }
.omni-tools, .extensions { display: flex; align-items: center; }
.extensions { margin-left: 12px; }
.avatar {
  width: 44px;
  height: 44px;
  margin: 0 10px;
  border-radius: 50%;
  background: #d94f7b;
  color: #fff;
  font: 24px/44px Inter, sans-serif;
}

.page { padding: 16px; background: #f4f4f4; }
.banner {
  display: flex;
  align-items: center;
  height: 72px;
  padding: 0 33px 0 16px;
  border-radius: 8px;
  background: linear-gradient(#f4f4f4 20%, #d4d4d4);
}
.logo { width: 48px; height: 48px; }
.brand { margin-left: 16px; }
.profile { margin-left: auto; color: #000; }

.panel { margin-top: 37px; padding: 6px; border: 2px solid #aaa; border-radius: 8px; }
.icon { width: 32px; height: 32px; }
.tabs {
  display: flex;
  gap: 7px;
  height: 89px;
  padding: 9px 7px 0;
  border: 2px solid #aaa;
  border-radius: 8px;
  background: linear-gradient(#e3e3e3 15%, #ccc 75%);
}
.tab {
  display: flex;
  align-items: center;
  gap: 8px;
  height: 76px;
  padding: 0 32px;
  border: 2px solid #d3d3d3;
  border-bottom: 0;
  border-radius: 8px 8px 0 0;
  background: linear-gradient(#eee 50%, #e4e4e4 50%, #f1f1f1 90%);
  color: #555;
  text-decoration: none;
}
.tab .icon, .raised { margin-bottom: 10px; }
.tab.selected { height: 78px; padding-bottom: 2px; border-color: #aaa; background: #fffde6; color: #222; }

.content { padding: 78px 4px 139px 51px; border-radius: 0 0 8px 8px; background: #fffde6; }
h2 {
  width: 87%;
  margin: 0;
  padding: 0 0 1px 20px;
  border-bottom: 2px dotted #000;
  color: #000;
  font-size: 32px;
  line-height: 36px;
}
.types { margin: 41px 0 98px 6px; border-collapse: collapse; }
.types td { height: 68px; padding: 0; }
.types td:first-child { width: 370px; }
.types td:nth-child(2) { width: 650px; }
.name { display: flex; align-items: center; gap: 8px; }
.act { display: block; }

.active { width: 87%; padding-left: 6px; margin-top: 57px; }
.active + .active { margin-top: 116px; }
.title { display: flex; align-items: center; height: 36px; }
.title strong { margin: 0 29px 0 9px; }
.remove { margin-left: auto; padding-right: 10px; }
.fields {
  display: grid;
  grid-template-columns: 201px 667px 110px 316px 667px 50px;
  row-gap: 20px;
  align-items: center;
  margin: 43px 0 22px;
}
.fields input {
  height: 45px;
  padding: 0 4px;
  border: 4px solid;
  border-color: #222 #777 #777 #222;
  border-radius: 7px;
  background: #fff;
  color: #000;
  font: 27px/32px "DejaVu Sans", Verdana, sans-serif;
}
.help { margin-left: 18px; }
.hidden-row { display: flex; align-items: center; height: 36px; padding-left: 6px; }
.hidden-row input {
  appearance: none;
  width: 26px;
  height: 26px;
  margin: 0 0 0 15px;
  border: 2px solid #767676;
  border-radius: 5px;
  background: #fff;
}

.buttons { display: flex; gap: 28px; padding: 45px 0 33px 16px; }
.btn {
  display: flex;
  align-items: center;
  gap: 13px;
  height: 58px;
  padding: 0 27px 0 14px;
  border: 2px solid #d3d3d3;
  border-radius: 8px;
  background: linear-gradient(#eee 50%, #e4e4e4 50%, #f1f1f1);
  color: #555;
  font: 26px/32px "DejaVu Sans", Verdana, sans-serif;
}
.btn svg { width: 30px; height: 30px; }
```
